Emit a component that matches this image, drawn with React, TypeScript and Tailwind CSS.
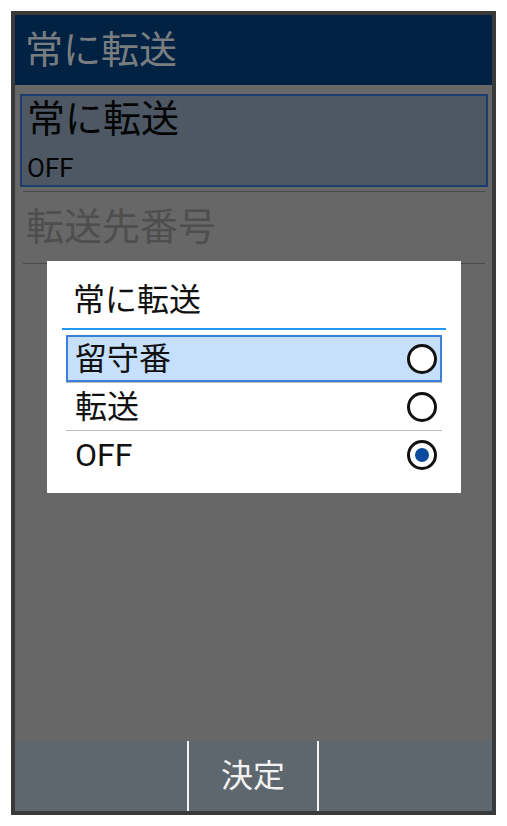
import React from 'react';

const jp = { fontFamily: 'Roboto, "Noto Sans CJK JP", sans-serif' };

const options = [
  { label: '留守番', checked: false, focused: true },
  { label: '転送', checked: false, focused: false },
  { label: 'OFF', checked: true, focused: false },
];

function Radio({ checked }: { checked: boolean }) {
  return (
    <div className="w-[30px] h-[30px] rounded-full border-[3px] border-[#111] flex items-center justify-center bg-white">
      {checked && <div className="w-[14px] h-[14px] rounded-full bg-[#0b4a9c]"></div>}
    </div>
  );
}

export default function App() {
  return (
    <div className="w-[507px] h-[826px] bg-white pt-[11px] pl-[11px]" style={jp}>
      <div className="relative w-[485px] h-[804px] border-4 border-[#3a3a3a] bg-[#676767] flex flex-col">
        {/* header */}
        <div className="h-[70px] bg-[#012243] pl-[10px] flex items-center text-[38px] text-[#7a7d80] leading-none">
          常に転送
        </div>

        {/* list */}
        <div className="flex-1 pl-[5px] pr-[4px] pt-[9px]">
          <div className="h-[93px] border-2 border-[#1b3d6d] bg-[#4e5864] pl-[5px] text-[#050505]">
            <div className="h-[46px] leading-[46px] text-[38px]">常に転送</div>
            <div className="mt-[12px] leading-[28px] text-[26px]">OFF</div>
          </div>
          <div className="mt-[4px] mx-[3px] h-px bg-[#4a4a4a]"></div>
          <div className="h-[71px] flex items-center pl-[6px] text-[38px] text-[#4e4e4e]">転送先番号</div>
          <div className="mx-[3px] h-px bg-[#4a4a4a]"></div>
        </div>

        {/* soft keys */}
        <div className="h-[70px] bg-[#5f676e] flex">
          <div className="w-[172px]"></div>
          <div className="w-[2px] bg-[#f2f2f2]"></div>
          <div className="w-[128px] flex items-center justify-center text-[32px] text-[#f2f2f2]">決定</div>
          <div className="w-[2px] bg-[#f2f2f2]"></div>
          <div className="flex-1"></div>
        </div>

        {/* dialog */}
        <div className="absolute left-[32px] top-[246px] w-[414px] h-[232px] bg-white">
          <div className="h-[67px] pt-[19px] pl-[26px] text-[32px] leading-[40px] text-[#111]">常に転送</div>
          <div className="mx-[15px] h-[2px] bg-[#2196f3]"></div>
          <div className="mx-[19px] mt-[5px]">
            {options.map((o, i) => (
              <div key={o.label} className={i < options.length - 1 ? 'border-b border-[#bdbdbd]' : ''}>
                <div
                  className={
                    o.focused
                      ? 'h-[47px] border-2 border-[#3a7fd8] bg-[#c6dffa] pl-[7px] pr-[3px] flex items-center justify-between'
                      : 'h-[47px] pl-[9px] pr-[5px] flex items-center justify-between'
                  }
                >
                  <span className="text-[32px] leading-none text-[#111]">{o.label}</span>
                  <Radio checked={o.checked} />
                </div>
              </div>
            ))}
          </div>
        </div>
      </div>
    </div>
  );
}
